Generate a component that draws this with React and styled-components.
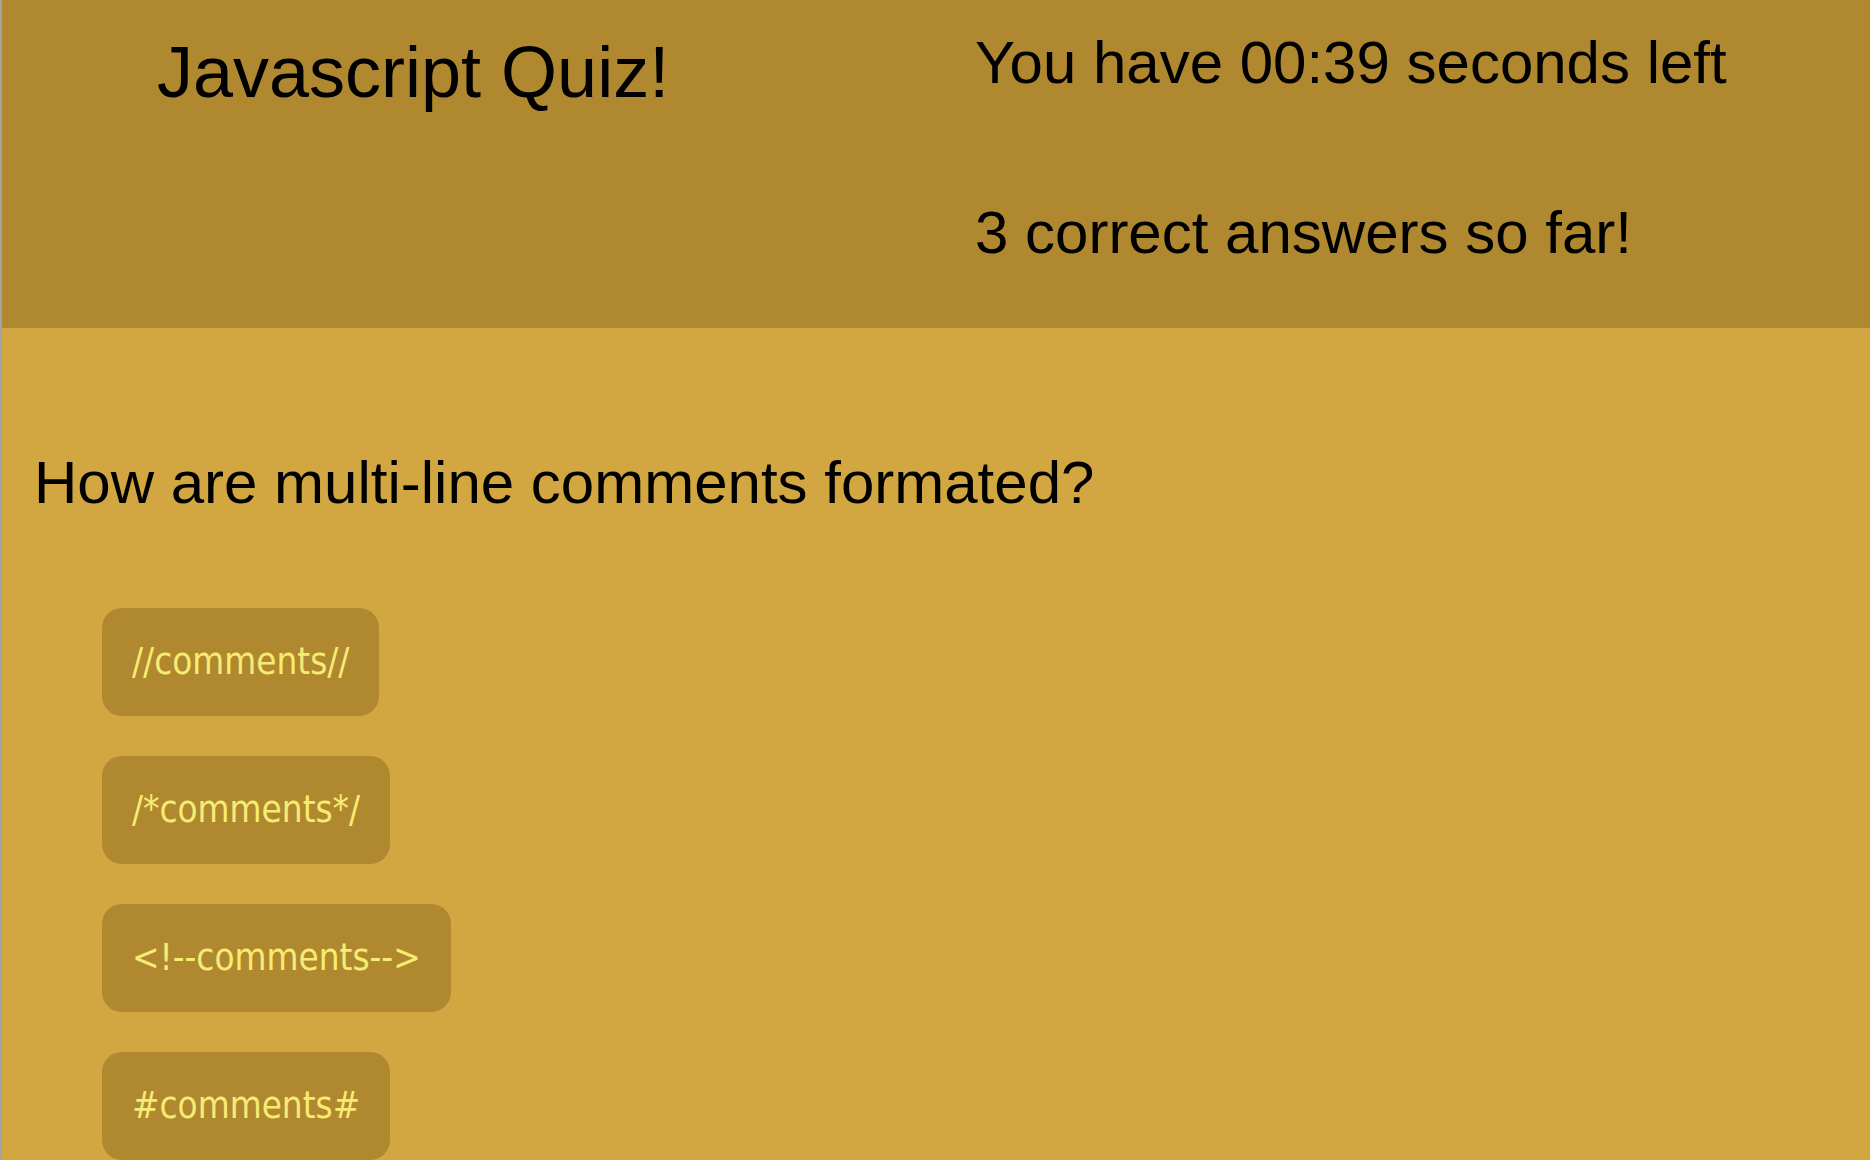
import React from 'react'
import styled, { createGlobalStyle } from 'styled-components'

const GlobalStyle = createGlobalStyle`
  html, body {
    margin: 0;
    padding: 0;
    overflow: hidden;
  }
  body {
    font-family: "Liberation Sans", Arial, sans-serif;
  }
`

const answers = ['//comments//', '/*comments*/', '<!--comments-->', '#comments#']

const Page = styled.div`
  min-height: 100vh;
  background: #d2a741;
  border-left: 2px solid #a4a4a4;
  box-sizing: border-box;
`

const Header = styled.header`
  display: grid;
  grid-template-columns: 973px 1fr;
  height: 328px;
  background: #b08830;
  color: #000;
`

const Title = styled.h1`
  margin: 0;
  padding: 36px 0 0 155px;
  font-size: 72px;
  font-weight: 400;
  line-height: 1;
`

const Status = styled.div`
  display: flex;
  flex-direction: column;
  gap: 110px;
  padding-top: 33px;
`

const StatusLine = styled.p`
  margin: 0;
  font-size: 60px;
  line-height: 1;
`

const Main = styled.main`
  padding: 125px 0 0 32px;
`

const Question = styled.h2`
  margin: 0;
  font-size: 60px;
  font-weight: 400;
  line-height: 1;
`

const Choices = styled.div`
  display: flex;
  flex-direction: column;
  align-items: flex-start;
  gap: 40px;
  margin-top: 95px;
  padding-left: 68px;
`

const Choice = styled.button`
  height: 108px;
  padding: 0 30px;
  border: none;
  border-radius: 20px;
  background: #b08830;
  color: #f6ec72;
  font-family: "DejaVu Sans", Verdana, sans-serif;
  font-stretch: condensed;
  font-size: 36.5px;
  line-height: 44px;
  cursor: pointer;
`

export default function App() {
  return (
    <Page>
      <GlobalStyle />
      <Header>
        <Title>Javascript Quiz!</Title>
        <Status>
          <StatusLine>You have 00:39 seconds left</StatusLine>
          <StatusLine>3 correct answers so far!</StatusLine>
        </Status>
      </Header>
      <Main>
        <Question>How are multi-line comments formated?</Question>
        <Choices>
          {answers.map((a) => (
            <Choice key={a}>{a}</Choice>
          ))}
        </Choices>
      </Main>
    </Page>
  )
}
